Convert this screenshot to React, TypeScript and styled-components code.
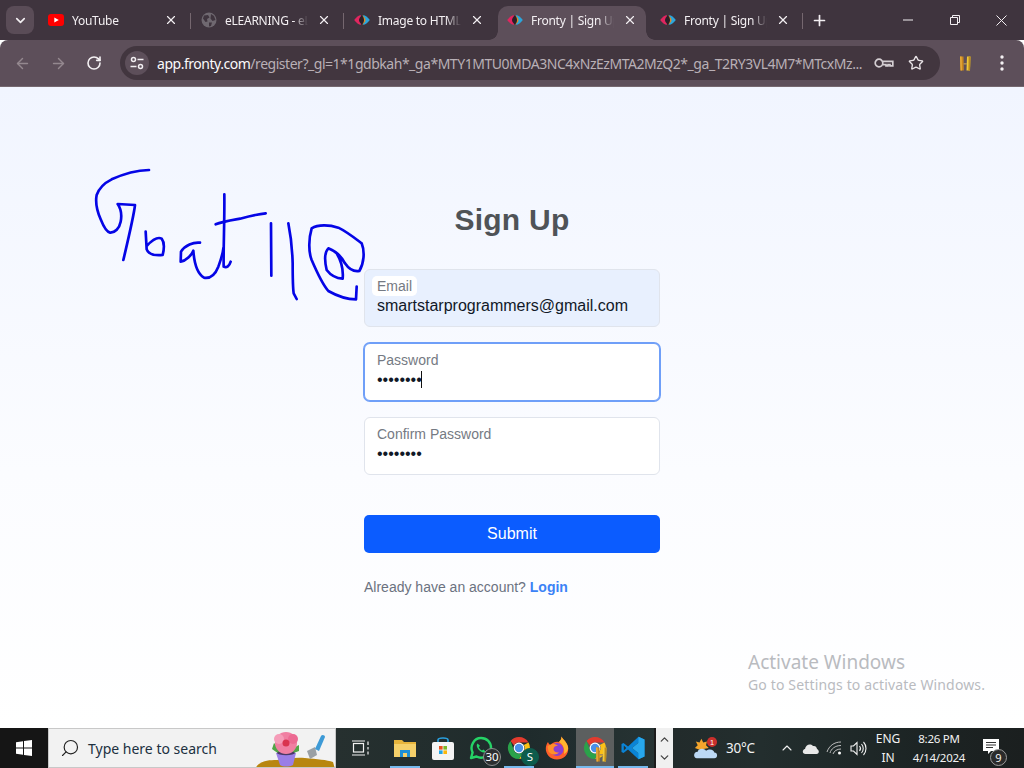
import React from "react";
import styled, { createGlobalStyle } from "styled-components";
import { ArrowLeft, ArrowRight, RotateCw, Star, ChevronDown, ChevronUp, X, Plus, Search } from "lucide-react";

const Global = createGlobalStyle`
  html, body { margin: 0; padding: 0; height: 768px; overflow: hidden; }
  * { box-sizing: border-box; }
  #root { height: 768px; }
`;

const Screen = styled.div`
  width: 1024px; height: 768px; display: flex; flex-direction: column; overflow: hidden;
  font-family: "Liberation Sans", Arial, sans-serif;
`;

const uiFont = `"Noto Sans", "Open Sans", sans-serif`;

const TabStrip = styled.div`
  height: 40px; flex: none; display: flex; align-items: flex-end; background: #3f343e; padding-left: 6px; color: #f3eff2; font-family: ${uiFont};
`;
const TabMenu = styled.div`
  width: 28px; height: 28px; margin: 0 4px 6px 0; border-radius: 8px; background: #5a4c57; display: flex; align-items: center; justify-content: center; flex: none;
`;
const Tab = styled.div<{ $active?: boolean; $sep?: boolean }>`
  position: relative; width: 153px; height: 34px; flex: none; display: flex; align-items: center; padding: 0 12px 6px 10px; gap: 8px; font-size: 12px;
  &::before {
    content: ""; position: absolute; left: 1px; right: 4px; top: 0; bottom: 0; border-radius: 10px 10px 0 0;
    background: ${(p) => (p.$active ? "#5d4f5a" : "transparent")};
  }
  &::after {
    content: ""; position: absolute; right: 0; top: 7px; height: 16px; width: 1px;
    background: ${(p) => (p.$sep ? "#75676f" : "transparent")};
  }
  & > :not(i) { position: relative; z-index: 1; }
`;
const TabFlare = styled.i<{ $side: "left" | "right" }>`
  position: absolute; bottom: 0; width: 9px; height: 9px;
  ${(p) => (p.$side === "right" ? "right: -5px;" : "left: -8px;")}
  background: radial-gradient(circle at ${(p) => (p.$side === "right" ? "100% 0" : "0 0")}, transparent 8.5px, #5d4f5a 9px);
`;
const TabTitle = styled.span`
  flex: 1; min-width: 0; white-space: nowrap; overflow: hidden; letter-spacing: -0.25px;
  -webkit-mask-image: linear-gradient(90deg, #000 82%, transparent 100%);
  mask-image: linear-gradient(90deg, #000 82%, transparent 100%);
`;
const NewTab = styled.div`
  width: 28px; height: 28px; margin: 0 0 6px 2px; display: flex; align-items: center; justify-content: center; flex: none;
`;
const WindowControls = styled.div`
  margin-left: auto; align-self: stretch; display: flex; align-items: center; flex: none;
`;
const WinButton = styled.div`
  width: 46.5px; height: 40px; display: flex; align-items: center; justify-content: center; padding-left: 1px;
`;

const Toolbar = styled.div`
  height: 47px; flex: none; display: flex; align-items: center; background: #5d4f5a; border-radius: 8px 8px 0 0; border-bottom: 1px solid #75686f; padding-left: 4px;
`;
const NavButton = styled.div<{ $dim?: boolean }>`
  width: 36px; height: 34px; display: flex; align-items: center; justify-content: center; flex: none;
  color: ${(p) => (p.$dim ? "#94888f" : "#f4f1f3")};
`;
const Omnibox = styled.div`
  width: 820px; height: 34px; margin-left: 8px; border-radius: 17px; background: #42363f; display: flex; align-items: center; padding: 0 16px 0 5px; flex: none;
  font-family: ${uiFont}; font-size: 14px;
`;
const SiteChip = styled.div`
  width: 24px; height: 24px; border-radius: 50%; background: #5d4f5a; display: flex; align-items: center; justify-content: center; flex: none; margin-right: 8px;
`;
const Url = styled.div`
  flex: 1; min-width: 0; white-space: nowrap; overflow: hidden; color: #b9b0b6; letter-spacing: -0.47px;
  b { font-weight: 400; color: #fbfafb; }
`;
const OmniActions = styled.div`
  display: flex; align-items: center; gap: 14px; flex: none; margin-left: 8px; color: #e9e4e7;
`;
const ToolbarEnd = styled.div`
  flex: 1; display: flex; align-items: center; justify-content: flex-end; padding-right: 20px; gap: 29px;
`;

const Page = styled.main`
  position: relative; flex: 1; min-height: 0; background: linear-gradient(180deg, #f1f5ff 0%, #fbfcff 60%, #ffffff 100%);
  display: flex; flex-direction: column; align-items: center; padding-top: 115px;
`;
const Scribble = styled.svg`
  position: absolute; left: 80px; top: 73px; width: 300px; height: 150px; pointer-events: none;
`;
const Heading = styled.h1`
  margin: 0 0 31px; font-size: 30px; line-height: 36px; font-weight: 700; letter-spacing: 0.25px; color: #4f5357;
`;
const Form = styled.form`
  width: 296px; display: flex; flex-direction: column; gap: 16px;
`;
const Field = styled.label<{ $variant?: "filled" | "focus" }>`
  position: relative; display: flex; flex-direction: column; align-items: flex-start; height: 58px; padding: 7px 12px; border-radius: 6px;
  background: ${(p) => (p.$variant === "filled" ? "#e8f0fe" : "#ffffff")};
  border: 1px solid #e0e4ec;
  ${(p) => p.$variant === "focus" && "border-color: #6f9ff8; box-shadow: 0 0 0 1px #6f9ff8;"}
`;
const FieldLabel = styled.span<{ $chip?: boolean }>`
  font-size: 14px; line-height: 18px; color: #757a83; position: relative; margin-bottom: 1px;
  ${(p) => p.$chip && "&::before { content: ''; position: absolute; inset: -1px -5px; background: #fff; border-radius: 5px; z-index: 0; }"}
  span { position: relative; }
`;
const FieldInput = styled.input`
  width: 100%; border: 0; outline: 0; background: transparent; padding: 0; font-family: "Liberation Sans", Arial, sans-serif; font-size: 16px; line-height: 20px; height: 20px; color: #111827;
`;
const Caret = styled.i`
  position: absolute; left: 56px; top: 27px; width: 1px; height: 17px; background: #111;
`;
const Submit = styled.button`
  height: 38px; margin-top: 24px; border: 0; border-radius: 5px; background: #0b5cff; color: #fff; font-family: "Liberation Sans", Arial, sans-serif; font-size: 16px;
`;
const Foot = styled.p`
  margin: 26px 0 0; width: 296px; font-size: 14px; line-height: 16px; color: #6b7280;
  a { color: #3b82f6; font-weight: 700; text-decoration: none; }
`;
const Watermark = styled.div`
  position: absolute; left: 748px; top: 563px; font-family: ${uiFont}; color: #b9bbbf;
  strong { display: block; font-weight: 400; font-size: 19px; line-height: 24px; }
  span { display: block; font-size: 14px; line-height: 22px; letter-spacing: 0.15px; }
`;

const Taskbar = styled.footer`
  height: 40px; flex: none; display: flex; background: #1b1b1b; color: #f2f2f2; font-family: ${uiFont}; font-size: 12px;
`;
const StartButton = styled.div`
  width: 48px; display: flex; align-items: center; justify-content: center; flex: none; background: #151515;
`;
const SearchBox = styled.div`
  width: 288px; flex: none; background: #f2f2f2; border: 1px solid #c8c8c8; display: flex; align-items: center; padding-left: 11px; gap: 8px; color: #20303f; font-size: 14px; position: relative; overflow: hidden;
`;
const Doodle = styled.svg`
  position: absolute; right: 0; top: 0; width: 80px; height: 40px;
`;
const AppsArea = styled.div`
  width: 318px; flex: none; display: flex; background: linear-gradient(90deg, #26302f, #1f2b2c 60%, #263333);
`;
const TaskView = styled.div`
  width: 50px; display: flex; align-items: center; justify-content: center; flex: none;
`;
const AppSlot = styled.div<{ $state?: "open" | "active" }>`
  position: relative; width: 38px; flex: none; display: flex; align-items: center; justify-content: center;
  background: ${(p) => (p.$state === "active" ? "#5c5f5f" : "transparent")};
  &::after {
    content: ""; position: absolute; bottom: 0; height: 2px;
    left: ${(p) => (p.$state === "active" ? "0" : "4px")}; right: ${(p) => (p.$state === "active" ? "0" : "4px")};
    background: ${(p) => (p.$state ? "#76b9ed" : "transparent")};
  }
`;
const Badge = styled.span<{ $dark?: boolean }>`
  position: absolute; right: -1px; bottom: 2px; width: 18px; height: 18px; border-radius: 50%; font-size: 11.5px; line-height: 16px; text-align: center; color: #fff;
  background: ${(p) => (p.$dark ? "#0d5c4c" : "#2c2f30")}; border: 1px solid ${(p) => (p.$dark ? "#0d5c4c" : "#8d8f90")};
`;
const SlotOverlay = styled.span`
  position: absolute; right: 7px; bottom: 6px; display: flex;
`;
const Arrows = styled.div`
  width: 17px; margin-left: 2px; flex: none; background: #f0f0f0; color: #444; display: flex; flex-direction: column; align-items: center; justify-content: space-around; padding: 2px 0;
`;
const Tray = styled.div`
  flex: 1; display: flex; align-items: center; background: linear-gradient(90deg, #222b2b, #232e2e 25%, #1c2424 70%, #1b1f1f); padding-left: 21px;
`;
const Temp = styled.span`
  width: 30px; flex: none; white-space: nowrap; font-size: 13.5px; letter-spacing: -0.2px; margin: 0 23px 0 8px;
`;
const TrayIcons = styled.div`
  display: flex; align-items: center; gap: 7px;
`;
const TwoLines = styled.div<{ $w: number; $tight?: boolean }>`
  width: ${(p) => p.$w}px; flex: none; text-align: center; font-size: ${(p) => (p.$tight ? "11.5px" : "12px")}; line-height: 19px;
  ${(p) => p.$tight && "letter-spacing: -0.25px;"}
`;
const Notify = styled.div`
  position: relative; width: 30px; height: 30px; margin-left: 9px; padding: 0 4px 3px 0; display: flex; align-items: center; justify-content: center; flex: none;
`;
const NotifyCount = styled.span`
  position: absolute; right: 1px; bottom: -3px; width: 17px; height: 17px; border-radius: 50%; background: #2b2b2b; border: 1px solid #9a9a9a; font-size: 11px; line-height: 15px; text-align: center;
`;

const Eye = () => (
  <svg width="16" height="16" viewBox="0 0 16 16" style={{ flex: "none" }}>
    <path d="M0.2 8 C2.5 5 4.5 3.2 7 3.2 L7 12.8 C4.5 12.8 2.5 11 0.2 8Z" fill="#e0265f" />
    <path d="M9 3.2 C11.5 3.2 13.5 5 15.8 8 C13.5 11 11.5 12.8 9 12.8Z" fill="#2ba6dc" />
    <path d="M8 3.2 C10.5 5 11.5 6.5 11.5 8 C11.5 9.5 10.5 11 8 12.8Z" fill="#e08a22" />
    <path d="M8 3.2 C6 5 5 6.5 5 8 C5 9.5 6 11 8 12.8 C9.5 11 10 9.5 10 8 C10 6.5 9.5 5 8 3.2Z" fill="#2a2029" />
  </svg>
);

const YouTubeIcon = () => (
  <svg width="16" height="12" viewBox="0 0 16 12" style={{ flex: "none" }}>
    <rect width="16" height="12" rx="3" fill="#f00" />
    <path d="M6.3 3.4 L10.8 6 L6.3 8.6Z" fill="#fff" />
  </svg>
);

const GlobeIcon = () => (
  <svg width="16" height="16" viewBox="0 0 16 16" style={{ flex: "none" }}>
    <circle cx="8" cy="8" r="7.5" fill="#6f6870" />
    <path d="M3 3.5 L7 3 L8.5 5.5 L6 7 L6.5 9.5 L4.5 10 L2 6.5Z M10 2 L13 4 L14.5 8 L11.5 9 L9.5 6.5Z M8 10.5 L11 10.5 L10 14 L8 14.5Z" fill="#3f343e" />
  </svg>
);

const CloseGlyph = () => <X size={14} strokeWidth={2} color="#f3eff2" style={{ flex: "none", width: 16 }} />;

const TuneIcon = () => (
  <svg width="14" height="14" viewBox="0 0 14 14" fill="none" stroke="#f2eef1" strokeWidth="1.5">
    <circle cx="3.5" cy="3.5" r="2" />
    <path d="M7.5 3.5H13.5M0.5 10.5H6.5" />
    <circle cx="10.5" cy="10.5" r="2" />
  </svg>
);

const KeyIcon = () => (
  <svg width="20" height="12" viewBox="0 0 20 12" fill="none" stroke="#d5cfd3" strokeWidth="1.7">
    <circle cx="5" cy="6" r="3.8" />
    <path d="M9 4.4H18.8V8.8H16V7.6H14V8.8H12V7.6H9" />
  </svg>
);

const ExtensionIcon = ({ scale = 1 }: { scale?: number }) => (
  <svg width={12 * scale} height={15 * scale} viewBox="0 0 12 15">
    <path d="M1 0.5 H4.5 L4.8 14.5 H1.5 Z" fill="#c7861f" />
    <path d="M1 0.5 H2.6 L3 14.5 H1.5Z" fill="#e6a93a" />
    <path d="M8 0.5 H11.5 L11 14.5 H7.5Z" fill="#f0c93a" />
    <path d="M9.6 0.5 H11.5 L11 14.5 H9.4Z" fill="#b98a1d" />
    <path d="M4.5 7 H8 V8.6 H4.5Z" fill="#a98d54" />
  </svg>
);

const Dots = () => (
  <svg width="4" height="16" viewBox="0 0 4 16" fill="#f4f1f3">
    <circle cx="2" cy="2" r="1.7" />
    <circle cx="2" cy="8" r="1.7" />
    <circle cx="2" cy="14" r="1.7" />
  </svg>
);

const WindowsLogo = () => (
  <svg width="16" height="16" viewBox="0 0 16 16" fill="#fff">
    <path d="M0 2.2 L7 1.2 V7.5 H0Z M8 1 L16 0 V7.5 H8Z M0 8.5 H7 V14.8 L0 13.8Z M8 8.5 H16 V16 L8 15Z" />
  </svg>
);

const FlowerDoodle = () => (
  <Doodle viewBox="0 0 80 40">
    <path d="M0 40 C4 32 12 31 22 31 C30 30 40 28 50 29 C62 30 72 31 78 33 L80 40Z" fill="#b8860f" />
    <path d="M52 22 L60 18 L62 26 L55 30 Z" fill="#9aa0a4" />
    <path d="M60 20 L66 7 C67 5 70 6 70 8 L64 22Z" fill="#3d9ad6" />
    <path d="M25 20 L19 14 L17 20 L24 25Z M36 20 L44 16 L44 22 L36 25Z" fill="#52a447" />
    <path d="M21 24 H41 L38 36 C34 38 28 38 25 36Z" fill="#9a7ee6" />
    <ellipse cx="31" cy="24" rx="9" ry="2.2" fill="#4a3a66" />
    <circle cx="31" cy="14" r="11" fill="#f07fa2" />
    <circle cx="24" cy="10" r="5" fill="#f59cb8" />
    <circle cx="38" cy="10" r="5" fill="#ec6a92" />
    <circle cx="31" cy="14" r="3.5" fill="#d9344f" />
  </Doodle>
);

const FolderIcon = () => (
  <svg width="22" height="20" viewBox="0 0 22 20">
    <path d="M0 2 H8 L10 4 H22 V18 H0Z" fill="#e7b43c" />
    <path d="M0 6 H22 V19 H0Z" fill="#f5d06a" />
    <path d="M6 12 H16 V19 H13 V15 H9 V19 H6Z" fill="#1d8fd6" />
  </svg>
);

const StoreIcon = () => (
  <svg width="22" height="23" viewBox="0 0 22 23">
    <path d="M6 6 V3 C6 1 8 1 11 1 C14 1 16 1 16 3 V6" fill="none" stroke="#2aa1e0" strokeWidth="1.6" />
    <rect y="5" width="22" height="18" rx="2" fill="#f4f4f4" />
    <rect x="7" y="9" width="3.6" height="3.6" fill="#e8501f" />
    <rect x="11.4" y="9" width="3.6" height="3.6" fill="#7ab929" />
    <rect x="7" y="13.4" width="3.6" height="3.6" fill="#1fa5e8" />
    <rect x="11.4" y="13.4" width="3.6" height="3.6" fill="#fbb80b" />
  </svg>
);

const WhatsAppIcon = () => (
  <svg width="26" height="26" viewBox="0 0 26 26" fill="none">
    <path d="M3 23 L4.6 17.5 C1.5 11 6 3 13 3 C19 3 23 7.5 23 13 C23 20 15 25 8.5 21.5Z" stroke="#25d366" strokeWidth="2.4" strokeLinejoin="round" />
    <path d="M9.5 8.5 C8 10 9 13 11 15 C13 17 16 18.5 17.5 16.5 L15.5 14.5 L14 15.5 C12.5 14.8 11.3 13.5 10.8 12.2 L12 10.8 Z" fill="#25d366" />
  </svg>
);

const ChromeIcon = ({ size = 24 }: { size?: number }) => (
  <svg width={size} height={size} viewBox="0 0 24 24" style={{ flex: "none" }}>
    <path d="M12 1 A11 11 0 0 1 21.5 6.5 H12 A5.5 5.5 0 0 0 7 9.5 L3.5 5 A11 11 0 0 1 12 1Z" fill="#e33b2e" />
    <path d="M21.5 6.5 A11 11 0 0 1 12 23 L16.8 15 A5.5 5.5 0 0 0 16.8 9Z" fill="#fbc116" />
    <path d="M3.5 5 A11 11 0 0 0 12 23 L16.8 15 A5.5 5.5 0 0 1 7.2 15Z" fill="#2aa24a" />
    <circle cx="12" cy="12" r="5.4" fill="#fff" />
    <circle cx="12" cy="12" r="4.2" fill="#4a90e8" />
  </svg>
);

const FirefoxIcon = () => (
  <svg width="24" height="24" viewBox="0 0 24 24">
    <path d="M16.5 0.5 C18 4 22.5 6 23.2 12 C23.8 19 18 23.5 12 23.5 C5 23.5 0.5 18 0.8 12 C1 9.5 1.8 7.5 3 6 C3.5 7.5 4.5 8.5 5.5 9 C7 6.5 11 5 14 6 C15.5 4.5 16.5 3 16.5 0.5Z" fill="#ff5f2a" />
    <path d="M16.5 0.5 C18 4 22.5 6 23.2 12 C23 15 21 17 19 18 C20 13 18 8 14 6 C15.5 4.5 16.5 3 16.5 0.5Z" fill="#ffb52e" />
    <circle cx="12" cy="13.5" r="6.5" fill="#8b3fd1" />
    <path d="M2.5 10.5 C5 7.5 10 7 13 9.5 C10.5 9.8 8.5 11 8.5 13 C8.5 15.5 11 17 14 16.5 C12 19 6 19.5 3.5 15.5Z" fill="#ff8f2a" />
  </svg>
);

const VSCodeIcon = () => (
  <svg width="24" height="24" viewBox="0 0 24 24">
    <path d="M17.5 0.8 L23.5 3.6 V20.4 L17.5 23.2 L7 13.6 L2.5 17 L0.5 16 V8 L2.5 7 L7 10.4Z M17.5 6.8 L11 12 L17.5 17.2Z M2.8 9.5 V14.5 L5.3 12Z" fill="#0a84d6" />
    <path d="M17.5 0.8 L23.5 3.6 V20.4 L17.5 23.2Z M17.5 6.8 V17.2 L11 12Z" fill="#27a7ec" fillRule="evenodd" />
  </svg>
);

const TaskViewIcon = () => (
  <svg width="18" height="16" viewBox="0 0 18 16" fill="none" stroke="#f2f2f2" strokeWidth="1.2">
    <rect x="1.5" y="3.5" width="10" height="8.5" />
    <path d="M0 1H13M0 15H13M16 1.5V5M16 7V9.5M16 11.5V14.5" />
  </svg>
);

const WeatherIcon = () => (
  <svg width="24" height="24" viewBox="0 0 26 26" style={{ flex: "none" }}>
    <path d="M8 3 L10 7 L14 6 L13 10 L16 13 L6 15 L1 13 L4 10 L2 6 L6 7Z" fill="#f4a52c" />
    <path d="M3 24 C-1 24 -1 17 4 17 C5 13 11 13 13 16 C17 13 22 15 22 18 C26 18 26 24 22 24Z" fill="#bcd9f5" />
    <circle cx="19.5" cy="6.5" r="5.5" fill="#c9302c" />
    <text x="19.5" y="9.5" fontSize="8" textAnchor="middle" fill="#fff" fontFamily="Liberation Sans">1</text>
  </svg>
);

const CloudIcon = () => (
  <svg width="17" height="11" viewBox="0 0 17 11" fill="#e8e8e8">
    <path d="M3.5 11 C0 11 0 6.5 3 6 C3.5 2 8 0 11 3 C14 2.5 15 5 15 6 C17.5 7 17.5 11 14.5 11Z" />
  </svg>
);

const WifiIcon = () => (
  <svg width="17" height="14" viewBox="0 0 17 14" fill="none" stroke="#bdbdbd" strokeWidth="1">
    <path d="M1 11 C3 5 8 1 15 1 M4 12 C5 8 9 4.5 15 4.5 M7 13 C8 10 11 8 15 8" />
    <circle cx="13.5" cy="12" r="1.5" fill="#fff" stroke="none" />
  </svg>
);

const VolumeIcon = () => (
  <svg width="17" height="15" viewBox="0 0 17 15" fill="none" stroke="#f2f2f2" strokeWidth="1.1">
    <path d="M1 5 H3.5 L7 1.5 V13.5 L3.5 10 H1Z M9.5 5 C10.8 6.5 10.8 8.5 9.5 10 M11.5 3 C13.8 5.5 13.8 9.5 11.5 12 M13.5 1 C16.8 4.5 16.8 10.5 13.5 14" />
  </svg>
);

const NotifyIcon = () => (
  <svg width="16" height="15" viewBox="0 0 16 15">
    <path d="M0 0 H16 V12 H8 L5 15 V12 H0Z" fill="#fff" />
    <path d="M3 3.5 H13 M3 6 H13 M3 8.5 H10" stroke="#333" strokeWidth="1" />
  </svg>
);

const MinIcon = () => (
  <svg width="10" height="2" viewBox="0 0 10 2"><path d="M0 1H10" stroke="#f3eff2" /></svg>
);
const RestoreIcon = () => (
  <svg width="10" height="10" viewBox="0 0 10 10" fill="none" stroke="#f3eff2"><path d="M0.5 2.5H7.5V9.5H0.5Z M2.5 2.5V0.5H9.5V7.5H7.5" /></svg>
);
const CloseWinIcon = () => (
  <svg width="11" height="11" viewBox="0 0 11 11" stroke="#f3eff2" strokeWidth="1"><path d="M0.5 0.5L10.5 10.5M10.5 0.5L0.5 10.5" /></svg>
);

const ink = [
  "M207 30 C170 31 130 42 95 58 C75 68 58 82 50 105 C46 125 50 150 62 178 C70 198 78 216 90 218 C105 219 118 205 122 185 C126 165 122 145 113 132 L165 135 C162 165 150 215 130 300",
  "M197 215 L200 268 C205 282 225 287 248 285 C253 265 252 245 245 236 C230 228 212 245 200 258",
  "M360 248 C340 246 315 255 303 275 L302 305 C318 303 335 285 340 272 C342 300 350 340 372 353 C390 356 405 345 415 320 C422 300 428 285 430 265",
  "M433 103 C434 180 430 260 431 320 C440 325 448 318 452 305",
  "M407 193 C425 185 445 182 480 176 C510 168 535 162 557 160",
  "M573 190 L574 347",
  "M625 190 C632 225 637 270 638 310 C638 350 638 380 641 400 L650 417",
  "M830 380 L828 418 C805 418 775 410 745 393 C725 370 710 335 695 300 C685 275 686 235 695 205 C715 192 750 195 775 203 C800 215 825 235 845 250 C855 275 852 310 838 333 C820 336 805 325 795 310 C785 290 770 275 745 265 C735 275 733 300 740 330 C755 350 770 355 788 356 C790 335 785 305 770 280",
];

export default function App() {
  return (
    <Screen>
      <Global />
      <TabStrip>
        <TabMenu><ChevronDown size={15} strokeWidth={2.6} color="#f3eff2" /></TabMenu>
        <Tab $sep><YouTubeIcon /><TabTitle>YouTube</TabTitle><CloseGlyph /></Tab>
        <Tab $sep><GlobeIcon /><TabTitle>eLEARNING - eLearning</TabTitle><CloseGlyph /></Tab>
        <Tab><Eye /><TabTitle>Image to HTML</TabTitle><CloseGlyph /></Tab>
        <Tab $active>
          <TabFlare $side="left" />
          <Eye /><TabTitle>Fronty | Sign Up</TabTitle><CloseGlyph />
          <TabFlare $side="right" />
        </Tab>
        <Tab $sep><Eye /><TabTitle>Fronty | Sign Up</TabTitle><CloseGlyph /></Tab>
        <NewTab><Plus size={17} strokeWidth={2.4} color="#f3eff2" /></NewTab>
        <WindowControls>
          <WinButton><MinIcon /></WinButton>
          <WinButton><RestoreIcon /></WinButton>
          <WinButton><CloseWinIcon /></WinButton>
        </WindowControls>
      </TabStrip>

      <Toolbar>
        <NavButton $dim><ArrowLeft size={17} strokeWidth={2} /></NavButton>
        <NavButton $dim><ArrowRight size={17} strokeWidth={2} /></NavButton>
        <NavButton><RotateCw size={16} strokeWidth={2.4} /></NavButton>
        <Omnibox>
          <SiteChip><TuneIcon /></SiteChip>
          <Url><b>app.fronty.com</b>/register?_gl=1*1gdbkah*_ga*MTY1MTU0MDA3NC4xNzEzMTA2MzQ2*_ga_T2RY3VL4M7*MTcxMz...</Url>
          <OmniActions>
            <KeyIcon />
            <Star size={16} strokeWidth={2} />
          </OmniActions>
        </Omnibox>
        <ToolbarEnd>
          <ExtensionIcon />
          <Dots />
        </ToolbarEnd>
      </Toolbar>

      <Page>
        <Scribble viewBox="0 0 900 450" fill="none" stroke="#0505e6" strokeWidth="8" strokeLinecap="round" strokeLinejoin="round">
          {ink.map((d) => <path key={d} d={d} />)}
        </Scribble>
        <Heading>Sign Up</Heading>
        <Form onSubmit={(e) => e.preventDefault()}>
          <Field $variant="filled">
            <FieldLabel $chip><span>Email</span></FieldLabel>
            <FieldInput type="email" readOnly defaultValue="smartstarprogrammers@gmail.com" />
          </Field>
          <Field $variant="focus">
            <FieldLabel><span>Password</span></FieldLabel>
            <FieldInput type="password" readOnly defaultValue="password" />
            <Caret />
          </Field>
          <Field>
            <FieldLabel><span>Confirm Password</span></FieldLabel>
            <FieldInput type="password" readOnly defaultValue="password" />
          </Field>
          <Submit type="submit">Submit</Submit>
        </Form>
        <Foot>Already have an account? <a href="#login">Login</a></Foot>
        <Watermark>
          <strong>Activate Windows</strong>
          <span>Go to Settings to activate Windows.</span>
        </Watermark>
      </Page>

      <Taskbar>
        <StartButton><WindowsLogo /></StartButton>
        <SearchBox>
          <Search size={20} strokeWidth={1.4} color="#222" style={{ transform: "scaleX(-1)" }} />
          Type here to search
          <FlowerDoodle />
        </SearchBox>
        <AppsArea>
          <TaskView><TaskViewIcon /></TaskView>
          <AppSlot $state="open"><FolderIcon /></AppSlot>
          <AppSlot><StoreIcon /></AppSlot>
          <AppSlot><WhatsAppIcon /><Badge>30</Badge></AppSlot>
          <AppSlot $state="open"><ChromeIcon /><Badge $dark>S</Badge></AppSlot>
          <AppSlot><FirefoxIcon /></AppSlot>
          <AppSlot $state="active"><ChromeIcon /><SlotOverlay><ExtensionIcon /></SlotOverlay></AppSlot>
          <AppSlot $state="open"><VSCodeIcon /></AppSlot>
        </AppsArea>
        <Arrows><ChevronUp size={13} strokeWidth={2.4} /><ChevronDown size={13} strokeWidth={2.4} /></Arrows>
        <Tray>
          <WeatherIcon />
          <Temp>30°C</Temp>
          <TrayIcons>
            <ChevronUp size={16} strokeWidth={1.6} />
            <CloudIcon />
            <WifiIcon />
            <VolumeIcon />
          </TrayIcons>
          <TwoLines $w={42}>ENG<br />IN</TwoLines>
          <TwoLines $w={60} $tight>8:26 PM<br />4/14/2024</TwoLines>
          <Notify><NotifyIcon /><NotifyCount>9</NotifyCount></Notify>
        </Tray>
      </Taskbar>
    </Screen>
  );
}
